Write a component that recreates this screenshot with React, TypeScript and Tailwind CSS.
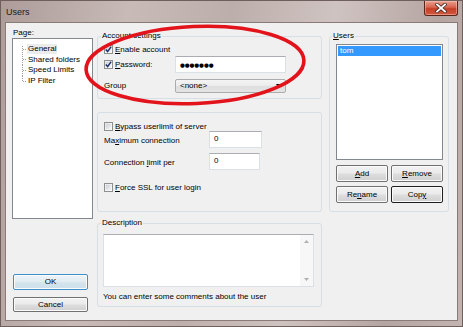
import React from "react";

function Check({ checked }: { checked?: boolean }) {
  return (
    <svg width="9" height="9" viewBox="0 0 9 9" className="shrink-0">
      <defs>
        <linearGradient id="cbg" x1="0" y1="0" x2="1" y2="1">
          <stop offset="0" stopColor="#c9cdd3" />
          <stop offset="1" stopColor="#f7f7f7" />
        </linearGradient>
      </defs>
      <rect x="0.5" y="0.5" width="8" height="8" fill="#ffffff" stroke="#8e8f8f" />
      <rect x="1.5" y="1.5" width="6" height="6" fill="url(#cbg)" />
      {checked && (
        <path d="M1.8 4.6 L3.6 6.6 L7.2 1.6" stroke="#1f3172" strokeWidth="1.5" fill="none" />
      )}
    </svg>
  );
}

const btnBase =
  "flex items-center justify-center rounded-[2px] border shadow-[inset_0_0_0_1px_#fbfbfb] text-[8px] leading-[10px]";
const btnNormal =
  "border-[#707070] bg-[linear-gradient(to_bottom,#f2f2f2,#ebebeb_45%,#dddddd_55%,#cfcfcf)]";

function TreeRow({ label, kind, selected }: { label: string; kind: "first" | "mid" | "last"; selected?: boolean }) {
  return (
    <div className="flex h-[10.6px] items-center">
      <svg width="14" height="11" viewBox="0 0 14 11" className="shrink-0 overflow-visible">
        {kind === "first" && <line x1="9.5" y1="2" x2="9.5" y2="11" stroke="#a0a0a0" strokeDasharray="1 1" />}
        {kind === "mid" && <line x1="9.5" y1="0" x2="9.5" y2="11" stroke="#a0a0a0" strokeDasharray="1 1" />}
        {kind === "last" && <line x1="9.5" y1="0" x2="9.5" y2="5.5" stroke="#a0a0a0" strokeDasharray="1 1" />}
        <line x1="10" y1="5.5" x2="14" y2="5.5" stroke="#a0a0a0" strokeDasharray="1 1" />
      </svg>
      <span className={selected ? "bg-[#ececec] px-[1px]" : "px-[1px]"}>{label}</span>
    </div>
  );
}

export default function App() {
  return (
    <div className="relative h-[327px] w-[463px] overflow-hidden border border-[#6e5f5c] bg-[linear-gradient(100deg,#ad9c99,#c7bab7_25%,#bcaeab_45%,#cfc3c1_65%,#b5a5a2_85%,#c3b4b1)] font-['Liberation_Sans',Arial,sans-serif] text-[8px] leading-[10px] text-black">
      {/* title bar */}
      <div className="flex h-[21px] items-start justify-between pl-[5px]">
        <span className="mt-[6px] text-[9px] leading-[10px] text-[#1a1a1a]">Users</span>
        <div className="mr-[4px] flex h-[15px] w-[34px] items-center justify-center rounded-b-[3px] border border-t-0 border-[#5c2419] bg-[linear-gradient(to_bottom,#e9a090,#d8634d_45%,#c63e27_55%,#d25a3f)] shadow-[inset_0_0_0_1px_rgba(255,210,200,0.45)]">
          <svg width="12" height="10" viewBox="0 0 12 10">
            <path d="M2 1.5 L10 8.5 M10 1.5 L2 8.5" stroke="#3b2a28" strokeWidth="3.4" strokeLinecap="square" />
            <path d="M2 1.5 L10 8.5 M10 1.5 L2 8.5" stroke="#ffffff" strokeWidth="1.8" strokeLinecap="square" />
          </svg>
        </div>
      </div>

      {/* client area */}
      <div className="mx-[4px] flex h-[299px] border border-[#8a7b78] bg-[#f0f0f0]">
        {/* left column */}
        <div className="ml-[6px] flex w-[81px] flex-col pt-[5px]">
          <div className="pl-[1px]">Page:</div>
          <div className="h-[181px] border border-[#828790] bg-white pt-[5px]">
            <TreeRow label="General" kind="first" selected />
            <TreeRow label="Shared folders" kind="mid" />
            <TreeRow label="Speed Limits" kind="mid" />
            <TreeRow label="IP Filter" kind="last" />
          </div>
          <div
            className={`${btnBase} ml-[1px] mt-[55px] h-[16px] w-[75px] border-[#3c8fc8] bg-[linear-gradient(to_bottom,#eef4f8,#e2ecf2_45%,#d5e4ed_55%,#cde0ec)] shadow-[inset_0_0_0_1px_#a9def6]`}
          >
            OK
          </div>
          <div className={`${btnBase} ${btnNormal} ml-[1px] mt-[7px] h-[15px] w-[75px]`}>Cancel</div>
        </div>

        {/* middle column */}
        <div className="ml-[4px] flex w-[225px] flex-col pt-[13px]">
          {/* Account settings */}
          <div className="relative h-[63px] rounded-[3px] border border-[#d5dfe5] pl-[6px] pt-[7px]">
            <span className="absolute left-[3px] top-[-6px] bg-[#f0f0f0] px-[1px]">Account settings</span>
            <div className="flex h-[11px] items-center">
              <Check checked />
              <span className="ml-[2px]">
                <span className="underline">E</span>nable account
              </span>
            </div>
            <div className="mt-[1px] flex h-[17px] items-center">
              <div className="flex w-[71px] items-center">
                <Check checked />
                <span className="ml-[2px]">
                  <span className="underline">P</span>assword:
                </span>
              </div>
              <div className="flex h-[17px] w-[111px] items-center border border-[#dbdfe6] border-t-[#abadb3] bg-white pl-[4px] font-['DejaVu_Sans',sans-serif] text-[5.6px] tracking-[-0.1px]">
                ●●●●●●●
              </div>
            </div>
            <div className="mt-[6px] flex h-[14px] items-center">
              <div className="w-[71px]">Group</div>
              <div className="flex h-[14px] w-[111px] items-center justify-between rounded-[2px] border border-[#acacac] bg-[linear-gradient(to_bottom,#f4f4f4,#ebebeb_50%,#dedede_50%,#e4e4e4)] pl-[4px] pr-[3px]">
                <span>&lt;none&gt;</span>
                <svg width="6" height="4" viewBox="0 0 6 4">
                  <path d="M0 0 L6 0 L3 4 Z" fill="#000" />
                </svg>
              </div>
            </div>
          </div>

          {/* Limits */}
          <div className="mt-[13px] h-[100px] rounded-[3px] border border-[#d5dfe5] pl-[6px] pt-[9px]">
            <div className="flex h-[9px] items-center">
              <Check />
              <span className="ml-[2px]">
                <span className="underline">B</span>ypass userlimit of server
              </span>
            </div>
            <div className="flex h-[17px] items-center">
              <div className="w-[105px] pt-[3px]">
                Ma<span className="underline">x</span>imum connection
              </div>
              <div className="h-[17px] w-[53px] border border-[#dbdfe6] border-t-[#abadb3] bg-white pl-[4px] pt-[2px]">0</div>
            </div>
            <div className="mt-[5px] flex h-[17px] items-center">
              <div className="w-[105px] pt-[3px]">
                Connection <span className="underline">l</span>imit per
              </div>
              <div className="h-[17px] w-[51px] border border-[#dbdfe6] border-t-[#abadb3] bg-white pl-[4px] pt-[2px]">0</div>
            </div>
            <div className="mt-[12px] flex h-[11px] items-center">
              <Check />
              <span className="ml-[2px]">
                <span className="underline">F</span>orce SSL for user login
              </span>
            </div>
          </div>

          {/* Description */}
          <div className="relative mt-[11px] h-[84px] rounded-[3px] border border-[#d5dfe5] pl-[5px] pt-[10px]">
            <span className="absolute left-[3px] top-[-6px] bg-[#f0f0f0] px-[1px]">Description</span>
            <div className="flex h-[53px] w-[211px] border border-[#dbdfe6] border-t-[#abadb3] bg-white">
              <div className="ml-auto flex h-full w-[13px] flex-col items-center justify-between bg-[#f7f7f7] py-[5px]">
                <svg width="5" height="3" viewBox="0 0 5 3">
                  <path d="M0 3 L5 3 L2.5 0 Z" fill="#b0b0b0" />
                </svg>
                <svg width="5" height="3" viewBox="0 0 5 3">
                  <path d="M0 0 L5 0 L2.5 3 Z" fill="#b0b0b0" />
                </svg>
              </div>
            </div>
            <div className="mt-[5px]">You can enter some comments about the user</div>
          </div>
        </div>

        {/* right column */}
        <div className="ml-[7px] w-[120px] pt-[13px]">
          <div className="relative h-[176px] rounded-[3px] border border-[#d5dfe5] pl-[6px] pt-[7px]">
            <span className="absolute left-[2px] top-[-6px] bg-[#f0f0f0] px-[1px]">
              <span className="underline">U</span>sers
            </span>
            <div className="h-[116px] w-[107px] border border-[#828790] bg-white p-[1px]">
              <div className="h-[10px] bg-[#3399ff] pl-[2px] text-white">tom</div>
            </div>
            <div className="mt-[5px] flex">
              <div className={`${btnBase} ${btnNormal} h-[17px] w-[52px]`}>
                <span className="underline">A</span>dd
              </div>
              <div className={`${btnBase} ${btnNormal} ml-[3px] h-[17px] w-[52px]`}>
                <span className="underline">R</span>emove
              </div>
            </div>
            <div className="mt-[4px] flex">
              <div className={`${btnBase} ${btnNormal} h-[17px] w-[52px]`}>
                Re<span className="underline">n</span>ame
              </div>
              <div className={`${btnBase} ml-[3px] h-[17px] w-[52px] border-[#1e1e1e] bg-[linear-gradient(to_bottom,#f2f2f2,#ebebeb_45%,#dddddd_55%,#cfcfcf)]`}>
                Cop<span className="underline">y</span>
              </div>
            </div>
          </div>
        </div>
      </div>

      {/* red annotation ellipse */}
      <svg className="pointer-events-none absolute left-0 top-0" width="463" height="327" viewBox="0 0 463 327">
        <ellipse cx="194" cy="64" rx="109" ry="38.5" transform="rotate(-2.5 194 64)" fill="none" stroke="#e3131b" strokeWidth="3.6" />
      </svg>
    </div>
  );
}
